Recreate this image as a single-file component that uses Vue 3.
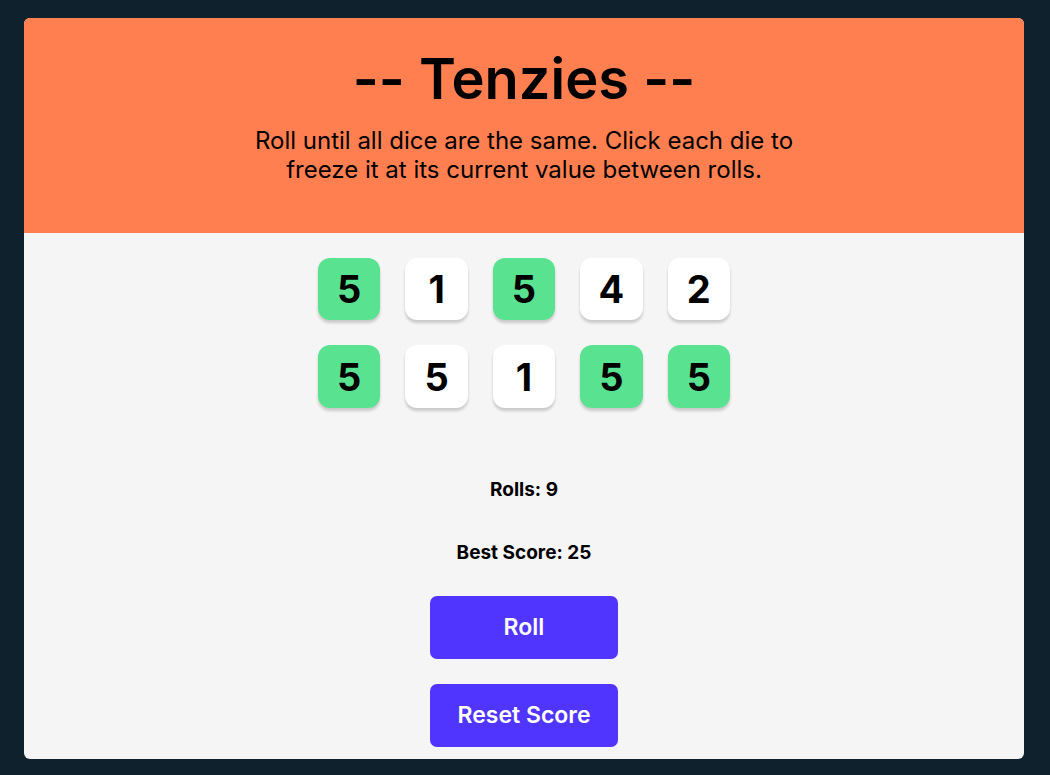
<script setup>
import { ref } from 'vue'

const dice = ref([
  { id: 1, value: 5, held: true },
  { id: 2, value: 1, held: false },
  { id: 3, value: 5, held: true },
  { id: 4, value: 4, held: false },
  { id: 5, value: 2, held: false },
  { id: 6, value: 5, held: true },
  { id: 7, value: 5, held: false },
  { id: 8, value: 1, held: false },
  { id: 9, value: 5, held: true },
  { id: 10, value: 5, held: true }
])
const rolls = ref(9)
const best = ref(25)

function roll() {
  dice.value.forEach((die) => {
    if (!die.held) die.value = Math.ceil(Math.random() * 6)
  })
  rolls.value++
}
</script>

<template>
  <main class="game">
    <header class="intro">
      <h1 class="title">-- Tenzies --</h1>
      <p class="rules">Roll until all dice are the same. Click each die to freeze it at its current value between rolls.</p>
    </header>
    <div class="dice">
      <button
        v-for="die in dice"
        :key="die.id"
        type="button"
        class="die"
        :class="{ held: die.held }"
        :aria-pressed="die.held"
        @click="die.held = !die.held"
      >{{ die.value }}</button>
    </div>
    <p class="score">Rolls: {{ rolls }}</p>
    <p class="score">Best Score: {{ best }}</p>
    <div class="actions">
      <button type="button" class="action" @click="roll">Roll</button>
      <button type="button" class="action" @click="best = 0">Reset Score</button>
    </div>
  </main>
</template>

<style>
body {
  background: #10212e;
}
</style>

<style scoped>
.game {
  box-sizing: border-box;
  margin: 18px 26px 16px 24px;
  padding-bottom: 12px;
  overflow: hidden;
  border-radius: 6px;
  background: #f5f5f5;
  color: #000;
  font-family: Inter, sans-serif;
  text-align: center;
}
.intro {
  padding: 28px 24px 49px;
  background: #ff7f50;
}
.title {
  margin: 0;
  font-size: 56px;
  line-height: 66px;
  font-weight: 600;
  font-variant-ligatures: no-contextual;
}
.rules {
  max-width: 560px;
  margin: 14px auto 0;
  font-size: 24px;
  line-height: 29px;
}
.dice {
  display: grid;
  grid-template-columns: repeat(5, 1fr);
  gap: 25px;
  max-width: 412px;
  margin: 25px auto 70px;
}
.die {
  aspect-ratio: 1;
  padding: 0;
  border: 0;
  border-radius: 12px;
  background: #fff;
  box-shadow: 0 3px 3px rgba(0, 0, 0, 0.18);
  color: #000;
  font: 700 38px/62px Inter, sans-serif;
  cursor: pointer;
}
.held {
  background: #59e391;
}
.score {
  margin: 0 0 39px;
  font-size: 19px;
  line-height: 24px;
  font-weight: 700;
}
.actions {
  display: grid;
  grid-template-columns: 188px;
  justify-content: center;
  gap: 25px;
  margin-top: -8px;
}
.action {
  height: 63px;
  padding: 0;
  border: 0;
  border-radius: 7px;
  background: #5035ff;
  color: #fff;
  font: 600 23px/30px Inter, sans-serif;
  cursor: pointer;
}
</style>
